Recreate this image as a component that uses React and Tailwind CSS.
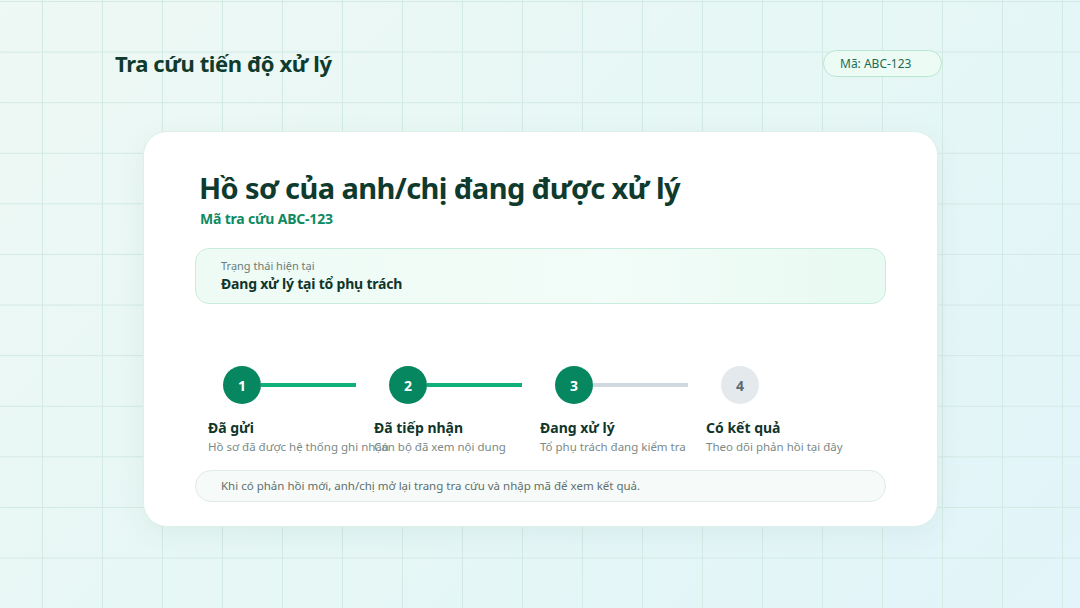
export default function App() {
  const steps = [
    { n: 1, t: "Đã gửi", d: "Hồ sơ đã được hệ thống ghi nhận", done: true, line: "bg-[#10b07a]" },
    { n: 2, t: "Đã tiếp nhận", d: "Cán bộ đã xem nội dung", done: true, line: "bg-[#10b07a]" },
    { n: 3, t: "Đang xử lý", d: "Tổ phụ trách đang kiểm tra", done: true, line: "bg-[#cfd8de]" },
    { n: 4, t: "Có kết quả", d: "Theo dõi phản hồi tại đây", done: false, line: null },
  ];
  return (
    <div className="relative w-[1080px] h-[608px] overflow-hidden bg-[linear-gradient(135deg,#eef8f4,#e6f7f5_50%,#e3f4fa)] font-['Noto_Sans',sans-serif]">
      <div className="absolute inset-0 bg-[linear-gradient(to_right,#d3e9e4_1px,transparent_1px),linear-gradient(to_bottom,#d3e9e4_1px,transparent_1px)] bg-[size:60px_50.6px] bg-[position:42px_1px]" />
      <div className="relative flex flex-col">
        <div className="flex items-center justify-between pl-[115px] pr-[138px] pt-[50px] h-[77px]">
          <h1 className="text-[22px] font-bold text-[#0f3b2e] tracking-[-0.4px]">Tra cứu tiến độ xử lý</h1>
          <div className="h-[27px] w-[119px] rounded-full border border-[#b9e6d2] bg-[#ecfbf4] flex items-center pl-[16px] text-[12px] text-[#1f6b55]">Mã: ABC-123</div>
        </div>
        <div className="ml-[143px] mt-[54px] w-[795px] h-[396px] rounded-[24px] bg-white border border-[#dcefe8] shadow-[0_8px_30px_rgba(16,80,60,0.06)] pt-[36px] px-[51px]">
          <h2 className="ml-[4px] text-[29px] leading-[40px] font-bold text-[#0f3b2e] tracking-[-0.6px]">Hồ sơ của anh/chị đang được xử lý</h2>
          <div className="ml-[5px] text-[14px] font-bold text-[#0e8a5f] tracking-[-0.2px]">Mã tra cứu ABC-123</div>
          <div className="mt-[19px] h-[56px] rounded-[14px] border border-[#c9eddc] bg-[linear-gradient(90deg,#eefbf5,#f2fcf8_60%,#e8faf2)] pl-[25px] pt-[9px]">
            <div className="text-[11px] leading-[16px] text-[#6b7d78]">Trạng thái hiện tại</div>
            <div className="text-[14px] leading-[20px] font-bold text-[#10352b] tracking-[-0.2px]">Đang xử lý tại tổ phụ trách</div>
          </div>
          <div className="mt-[62px] ml-[13px] flex">
            {steps.map((s) => (
              <div key={s.n} className="w-[166px] shrink-0">
                <div className="flex items-center pl-[15px] h-[38px]">
                  <div className={`w-[38px] h-[38px] rounded-full flex items-center justify-center text-[14px] font-bold ${s.done ? "bg-[#07875f] text-white" : "bg-[#e3e9ed] text-[#5b6b73]"}`}>{s.n}</div>
                  {s.line && <div className={`h-[4px] w-[95px] ${s.line}`} />}
                </div>
                <div className="mt-[14px] text-[14px] leading-[20px] font-bold text-[#10352b]">{s.t}</div>
                <div className="text-[11.5px] leading-[18px] text-[#7a8a88] whitespace-nowrap">{s.d}</div>
              </div>
            ))}
          </div>
          <div className="mt-[14px] h-[32px] rounded-full border border-[#dfeaea] bg-[#f6faf9] flex items-center pl-[25px] text-[11.5px] text-[#5f706d]">Khi có phản hồi mới, anh/chị mở lại trang tra cứu và nhập mã để xem kết quả.</div>
        </div>
      </div>
    </div>
  );
}
